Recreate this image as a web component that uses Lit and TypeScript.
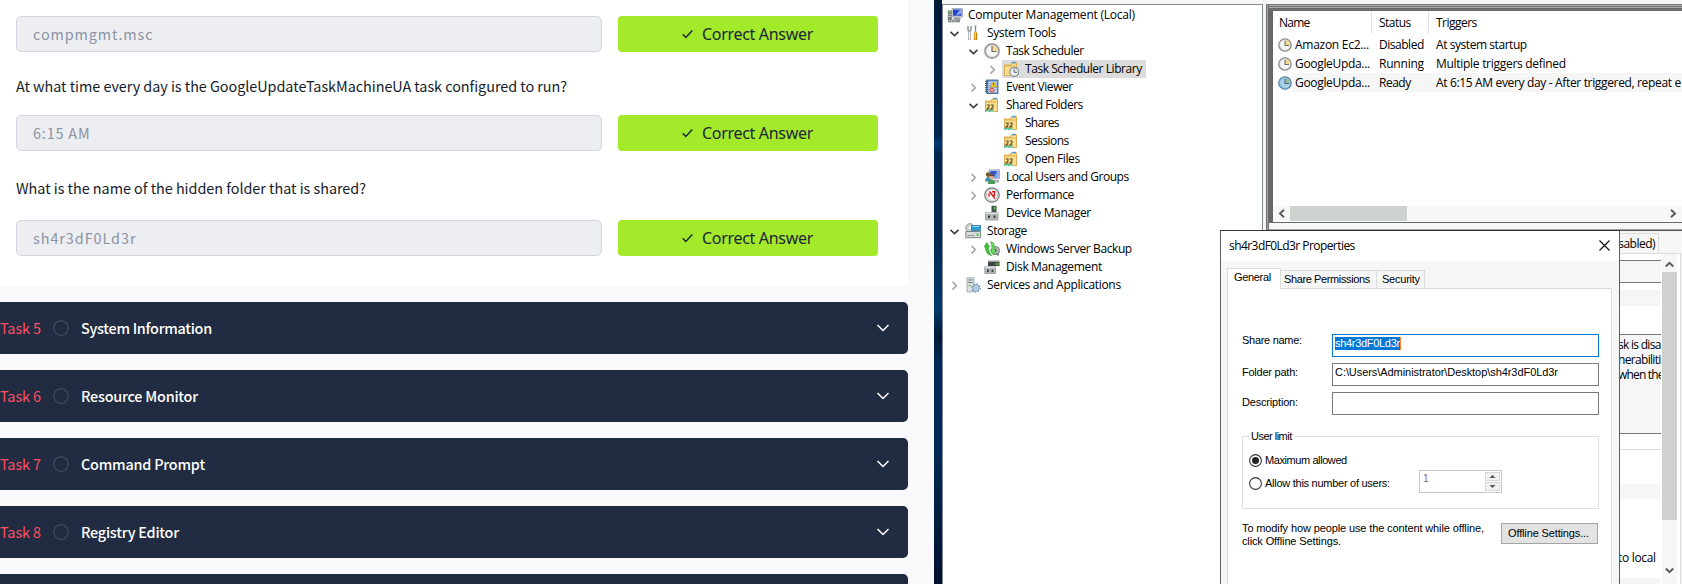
import { LitElement, html, css, svg, nothing } from "lit";
import { customElement, property } from "lit/decorators.js";

/* Text run whose tracking is tuned so that it spans a given width. */
@customElement("fit-text")
class FitText extends LitElement {
  @property({ type: Number }) w = 0;
  @property() text = "";
  static styles = css`
    :host { display: block; white-space: pre; flex: none; }
    span { display: inline-block; }
  `;
  render() {
    return html`<span>${this.text}</span>`;
  }
  updated() {
    const el = this.renderRoot.querySelector("span") as HTMLElement;
    el.style.letterSpacing = "0px";
    const natural = el.getBoundingClientRect().width;
    if (this.w && this.text.length > 1) {
      el.style.letterSpacing = `${(this.w - natural) / (this.text.length - 0.5)}px`;
    }
  }
}

const t = (text: string, w: number, cls = "") =>
  html`<fit-text class=${cls} .text=${text} .w=${w}></fit-text>`;

const icon = (body: unknown, cls = "ico") =>
  html`<svg class=${cls} viewBox="0 0 16 16" width="16" height="16">${body}</svg>`;

const folder = svg`
  <path d="M1 3.5h6l1-2h6v13H1z" fill="#e0b04c"/>
  <path d="M2 4.5h6l1-2h4v11H2z" fill="#fbe08f"/>
  <path d="M9 1.5h4" stroke="#4b9fe0" stroke-width="1.4"/>
  <path d="M1.500 5h12v9.5h-12z" fill="#f8dd8d" stroke="#d3a54a" stroke-width=".8"/>`;
const sharedFolder = svg`${folder}
  <path d="M1 15c0-3 3-3 4-1 1-2 4-2 5 1z" fill="#4dbb96"/>
  <path d="M2.800 8h2.200v1.900L3 12h2.500M6.800 8H9v1.900L7 12h2.500" fill="none" stroke="#5b4f28" stroke-width="1.1"/>
  <path d="M2 14.7h3M6.500 14.7h3" stroke="#cfeee4" stroke-width=".8"/>`;
const clock = svg`
  <circle cx="8" cy="8" r="7.2" fill="#cfcfcf" stroke="#858585" stroke-width="1.2"/>
  <circle cx="8" cy="8" r="5.5" fill="#f7f7f5"/>
  <path d="M8 8V2.500A5.500 5.500 0 0 1 13.500 8z" fill="#f3d98b"/>
  <path d="M8 3v5.500h4.500" fill="none" stroke="#6d6d6d" stroke-width="1.2"/>`;
const clockBlue = svg`
  <circle cx="8" cy="8" r="7.2" fill="#86b5d6" stroke="#5585a8" stroke-width="1.3"/>
  <circle cx="8" cy="8" r="5.600" fill="#a9d0ea"/>
  <path d="M8 8V2.500A5.500 5.500 0 0 1 13.500 8z" fill="#9fb9a4"/>
  <path d="M8 3v5.500h4.500" fill="none" stroke="#41637a" stroke-width="1.2"/>`;

const ICONS: Record<string, unknown> = {
  computer: svg`
    <path d="M5 1.500h10.500v8.500H5z" fill="#d9dde6" stroke="#9aa0ac" stroke-width=".8"/>
    <path d="M6 2.500h8.500v6.300H6z" fill="#2746c8"/><path d="M8.500 8.800 13 2.500h1.500v4z" fill="#8fa8f5"/>
    <path d="M.8 3.500h4v10h-4z" fill="#6f7a76"/><path d="M1.500 5h2.600" stroke="#79e06a"/>
    <path d="M1.500 7.500h2.600M1.500 9.500h2.600" stroke="#d5dad7" stroke-width=".9"/>
    <path d="M7 10.500h6l1 2H6z" fill="#9197a3"/><path d="M1 12.500h12v2.800H1z" fill="#858a8c"/>
    <path d="M2 13.800h8" stroke="#d7dadb" stroke-dasharray="1 1"/>`,
  tools: svg`
    <path d="M3 1v4l1.500 1.500L6 5V1" fill="none" stroke="#8d9498" stroke-width="1.5"/>
    <path d="M4.500 6v9" stroke="#a5adb0" stroke-width="2.600"/><path d="M4.500 7v7.500" stroke="#edf0f1" stroke-width="1"/>
    <path d="M10.500 1v6" stroke="#8b9296" stroke-width="1.4"/><path d="M9.500 1h2" stroke="#8b9296"/>
    <path d="M10.500 7.500v7.500" stroke="#c98208" stroke-width="3.4"/><path d="M10.200 8v6.500" stroke="#ffd04f" stroke-width="1.400"/>`,
  clock,
  folderClock: svg`${folder}
    <circle cx="11.200" cy="11" r="4.400" fill="#eef1f2" stroke="#7c8a92" stroke-width="1.1"/>
    <path d="M11.200 8.300V11.300H14" fill="none" stroke="#56646c"/>`,
  event: svg`
    <path d="M2.500 1h11.500v13.500H2.500z" fill="#6d9ad8" stroke="#33588f" stroke-width=".8"/>
    <path d="M4.500 2.500h8.500v11H4.500z" fill="#c3d7f1"/>
    <path d="M5 4.500h8M5 6.500h8M5 8.500h8M5 10.500h8" stroke="#7f9fcf" stroke-width=".7"/>
    <path d="M1 2.500h3M1 4.500h3M1 6.500h3M1 8.500h3M1 10.500h3M1 12.500h3" stroke="#49545f" stroke-width=".9"/>
    <path d="M9.500 2.500 12.500 8H6.500z" fill="#ffd93b" stroke="#c29109" stroke-width=".7"/><path d="M9.500 4.500v2" stroke="#5b4500"/>
    <circle cx="8" cy="11.300" r="2.500" fill="#d4575c"/><path d="m7 10.300 2 2m0-2-2 2" stroke="#fff" stroke-width=".9"/>`,
  shared: sharedFolder,
  users: svg`
    <path d="M5 .8h10.500v9H5z" fill="#d4dae6" stroke="#939dae" stroke-width=".8"/><path d="M6.200 2h8v6.500h-8z" fill="#3158cf"/>
    <path d="M10 8.500 13 2h1.300v6.500z" fill="#86a3f2"/><path d="M9 11h6v2.500H9z" fill="#a9afb9"/>
    <circle cx="4.200" cy="5.600" r="2.400" fill="#7c5426"/><path d="M1 12.500c0-6 6.500-6 6.500 0z" fill="#3f8fae"/>
    <circle cx="7.500" cy="8" r="2.400" fill="#dfb080"/><path d="M5.200 7.500c.5-3 4.500-3 4.700 0-1.500-1-3-1-4.700 0z" fill="#54391c"/>
    <path d="M3.800 15c0-6 7.500-6 7.500 0z" fill="#4b9b5e"/>`,
  perf: svg`
    <circle cx="8" cy="8" r="7.200" fill="#e9e9e9" stroke="#777" stroke-width="1.200"/>
    <circle cx="8" cy="8" r="5.500" fill="#fff" stroke="#b4b4b4" stroke-width=".7"/>
    <path d="M5 9.500V6.500M5.500 4.500l5.500 7M8 4.800h2.500V9" fill="none" stroke="#d3161b" stroke-width="1.500"/>`,
  device: svg`
    <path d="M7.500.8h5v8h-5z" fill="#4b5050"/><path d="M10.500 2v2.500" stroke="#57e04d" stroke-width="1.300"/>
    <path d="M1.500 7.500h12.500v7.500H1.500z" fill="#b4b8b8" stroke="#8a8e8e" stroke-width=".7"/>
    <path d="M1.500 7.500h12.500v1.500H1.500z" fill="#dcdfdf"/><path d="M4 10.500h2v2.500H4zM9.500 10.500h2v2.500h-2z" fill="#3c4040"/>`,
  storage: svg`
    <circle cx="4.800" cy="4.800" r="4.200" fill="#c9ced1" stroke="#8a9297" stroke-width=".8"/><circle cx="4.800" cy="4.800" r="1.200" fill="#fff"/>
    <path d="M6.500 2.500h9v5h-9z" fill="#2c9bd1" stroke="#1c6e9b" stroke-width=".7"/><path d="M7.500 3.500h6.500" stroke="#92dbf8"/>
    <path d="M.8 8.500h14.700v6.200H.8z" fill="#d8dcdc" stroke="#737a7b" stroke-width=".9"/>
    <path d="M2.500 12.500h7" stroke="#8f9697"/><path d="M12.500 10.500v2.500" stroke="#3fcb35" stroke-width="1.800"/>`,
  backup: svg`
    <circle cx="11.500" cy="9.500" r="4" fill="#b5b9ba" stroke="#777d7f"/><circle cx="11.500" cy="9.500" r="1.300" fill="#4c5254"/>
    <path d="M14 13v2M12 13h3" stroke="#6b7173"/>
    <path d="M0 6 2.800 1.500 5.800 6H4.500c0 4 1 6 3.400 8.500C3 14 1.300 10 1.500 6z" fill="#42c638" stroke="#1d8a1a" stroke-width=".5"/>
    <path d="M6.500.8c3 0 4.500 3 4 8.200H12L9.300 14 6.200 9h1.500c.4-3 .2-5.500-1.200-8.200z" fill="#65dd58" stroke="#1d8a1a" stroke-width=".5"/>`,
  disk: svg`
    <path d="M4 2.500h11.500v4.500H4z" fill="#3f4445"/><path d="M11.500 5h3" stroke="#4be045" stroke-width="1.300"/>
    <path d="M4 2h11.500" stroke="#9aa0a1"/><path d="M.8 7.500h10.700v7H.8z" fill="#b4b8b8" stroke="#8a8e8e" stroke-width=".7"/>
    <path d="M.8 7.500h10.700V9H.8z" fill="#e0e3e3"/><path d="M3 10.500h1.800v2.500H3zM7.500 10.500h1.800v2.500H7.500z" fill="#3c4040"/>`,
  services: svg`
    <path d="M2 .8h7v14H2z" fill="#dce1e4" stroke="#969da1" stroke-width=".8"/>
    <path d="M3.200 3h4.600M3.200 5.500h4.600" stroke="#6d767b"/><path d="M3.500 8.500h2.500" stroke="#58b54e"/>
    <circle cx="11" cy="11" r="3" fill="#dceaf5" stroke="#86a7c4" stroke-width="1.500"/>
    <circle cx="11" cy="11" r="4.300" fill="none" stroke="#86a7c4" stroke-width="1.300" stroke-dasharray="1.500 1.850"/>
    <circle cx="11" cy="11" r="1.100" fill="#7b98b3"/>`,
};

type Node = [level: number, exp: "" | "open" | "closed", icon: string, text: string, w: number, selected?: boolean];
const TREE: Node[] = [
  [0, "", "computer", "Computer Management (Local)", 167],
  [1, "open", "tools", "System Tools", 69],
  [2, "open", "clock", "Task Scheduler", 78],
  [3, "closed", "folderClock", "Task Scheduler Library", 117, true],
  [2, "closed", "event", "Event Viewer", 67],
  [2, "open", "shared", "Shared Folders", 77],
  [3, "", "shared", "Shares", 34],
  [3, "", "shared", "Sessions", 44],
  [3, "", "shared", "Open Files", 55],
  [2, "closed", "users", "Local Users and Groups", 123],
  [2, "closed", "perf", "Performance", 68],
  [2, "", "device", "Device Manager", 85],
  [1, "open", "storage", "Storage", 40],
  [2, "closed", "backup", "Windows Server Backup", 126],
  [2, "", "disk", "Disk Management", 96],
  [1, "closed", "services", "Services and Applications", 134],
];

const expander = (kind: string) => html`<svg class="exp" width="11" height="11" viewBox="0 0 11 11">
  ${kind === "open"
    ? svg`<path d="M1.500 3.800 5.500 7.500 9.500 3.800" fill="none" stroke="#404040" stroke-width="1.700"/>`
    : kind === "closed"
      ? svg`<path d="M3.500 1.800 7.300 5.700 3.500 9.600" fill="none" stroke="#a6a6a6" stroke-width="1.600"/>`
      : nothing}
</svg>`;

const arrow = (d: string, cls = "arrow") => html`<svg class=${cls} width="9" height="9" viewBox="0 0 9 9">
  <path d=${d} fill="none" stroke="#5c5c5c" stroke-width="2"/></svg>`;

@customElement("task-room")
class TaskRoom extends LitElement {
  static styles = css`
    :host {
      display: block; width: 934px; height: 584px; overflow: hidden; background: #f9f9fb; flex: none;
      font: 14.4px "Noto Sans CJK JP", "Noto Sans", sans-serif; color: #151c2b;
    }
    .card { width: 908px; height: 286px; box-sizing: border-box; background: #fff; border-radius: 0 0 4px 0; padding: 16px 30px 0 16px; }
    .row { display: flex; gap: 16px; height: 36px; }
    .field { width: 586px; box-sizing: border-box; border: 1px solid #d1d5de; border-radius: 5px; background: #edeef2; color: #8b93a3; display: flex; align-items: center; padding: 0 16px 1px; }
    .ok { width: 260px; border-radius: 4px; background: #a3ea2a; display: flex; align-items: center; justify-content: center; gap: 9px; font-family: "Noto Sans", sans-serif; font-size: 16px; color: #1c2538; padding: 0 1px 1px 0; box-sizing: border-box; }
    .q { display: flex; align-items: center; height: 63px; box-sizing: border-box; }
    .q.second { height: 69px; padding-top: 3px; }
    .q.first { padding-top: 4px; }
    .tasks { display: flex; flex-direction: column; gap: 16px; padding-top: 16px; width: 908px; }
    .task { height: 52px; flex: none; background: #212c42; border-radius: 0 5px 5px 0; display: flex; align-items: center; color: #fff; box-sizing: border-box; padding: 0 17px 0 0; }
    .no { width: 53px; color: #ff4f61; padding-bottom: 2px; }
    .ring { margin-right: 12px; }
    .name { font-weight: 500; flex: 1; padding-bottom: 2px; }
  `;
  answer(v: string, w: number) {
    return html`<div class="row">
      <div class="field">${t(v, w)}</div>
      <div class="ok">
        <svg width="11" height="10" viewBox="0 0 11 10"><path d="M.7 5.200 3.800 8.400 10.300 1.500" fill="none" stroke="#1c2538" stroke-width="1.500"/></svg>
        ${t("Correct Answer", 111)}
      </div>
    </div>`;
  }
  render() {
    const tasks: [string, string, number][] = [
      ["Task 5", "System Information", 131], ["Task 6", "Resource Monitor", 117],
      ["Task 7", "Command Prompt", 124], ["Task 8", "Registry Editor", 98], ["", "", 0],
    ];
    return html`
      <div class="card">
        ${this.answer("compmgmt.msc", 120)}
        <div class="q first">${t("At what time every day is the GoogleUpdateTaskMachineUA task configured to run?", 551)}</div>
        ${this.answer("6:15 AM", 57)}
        <div class="q second">${t("What is the name of the hidden folder that is shared?", 350)}</div>
        ${this.answer("sh4r3dF0Ld3r", 103)}
      </div>
      <div class="tasks">${tasks.map(([no, name, w]) => html`<div class="task">
        <div class="no">${t(no, 41)}</div>
        <svg class="ring" width="16" height="16" viewBox="0 0 16 16"><circle cx="8" cy="8" r="7.300" fill="none" stroke="#3b4759" stroke-width="1.400"/></svg>
        <div class="name">${t(name, w)}</div>
        <svg width="16" height="16" viewBox="0 0 16 16"><path d="m2.500 5 5.500 5.500L13.500 5" fill="none" stroke="#fff" stroke-width="1.500"/></svg>
      </div>`)}</div>`;
  }
}

@customElement("share-dialog")
class ShareDialog extends LitElement {
  static styles = css`
    :host { display: flex; flex-direction: column; box-sizing: border-box; width: 400px; height: 354px; border: 1px solid #5f5f5f; border-top-color: #333; border-bottom: 0; background: #f6f6f6; font: 11px/13px "Liberation Sans", sans-serif; color: #000; }
    .title { height: 30px; box-sizing: border-box; background: #fff; display: flex; justify-content: space-between; align-items: center; padding: 0 9px 2px 8px; font: 12px "Open Sans", sans-serif; }
    .tabs { display: flex; align-items: flex-end; height: 27px; padding: 0 0 0 6px; }
    .tab { box-sizing: border-box; border: 1px solid #dcdcdc; border-bottom: 0; border-left: 0; height: 18px; display: flex; align-items: center; padding: 0 0 1px 3px; width: 96px; }
    .tab.on { height: 21px; width: 54px; border-left: 1px solid #dcdcdc; background: #fff; padding: 0 0 3px 6px; margin-bottom: -1px; position: relative; }
    .tab.sec { width: 48px; padding-left: 5px; }
    .page { flex: 1; margin: 0 7px 0 6px; border: 1px solid #dcdcdc; border-bottom: 0; background: #fff; padding: 45px 11px 0 14px; display: flex; flex-direction: column; min-height: 0; overflow: hidden; }
    .line { display: flex; height: 23px; margin-bottom: 6px; }
    .label { width: 90px; }
    .line.f .label { padding-top: 3px; }
    .line.d .label { padding-top: 4px; }
    .box { width: 267px; box-sizing: border-box; border: 1px solid #7a7a7a; padding: 2px 2px; }
    .box.focus { border: 1px solid #0078d7; padding: 2px; }
    .sel { width: fit-content; background: #0078d7; color: #fff; height: 13px; border-right: 1px solid #ff8728; }
    .group { border: 1px solid #dcdfdf; height: 73px; box-sizing: border-box; margin-top: 15px; width: 357px; flex: none; padding: 0 0 0 6px; }
    .legend { width: fit-content; background: #fff; padding: 0 3px 0 2px; margin-top: -7px; }
    .choice { display: flex; align-items: center; height: 13px; gap: 3px; }
    .choice.a { margin-top: 11px; }
    .choice.b { margin-top: 10px; }
    .spin { margin: -4px 0 0 26px; width: 83px; height: 23px; box-sizing: border-box; border: 1px solid #c6c6c6; flex: none; display: flex; justify-content: space-between; padding: 1px 1px 1px 3px; color: #8c7070; }
    .spin .btns { display: flex; flex-direction: column; gap: 1px; }
    .spin .btns svg { display: block; background: #f0f3f0; outline: 1px solid #d8d8d8; outline-offset: -1px; }
    .foot { display: flex; justify-content: space-between; margin-top: 14px; padding-right: 2px; }
    .note { margin-top: -1px; }
    .btn { width: 97px; height: 21px; box-sizing: border-box; border: 1px solid #a4a4a4; background: #e3e3e3; padding: 3px 0 0 6px; }
  `;
  radio(on: boolean) {
    return html`<svg width="13" height="13" viewBox="0 0 13 13"><circle cx="6.500" cy="6.500" r="5.900" fill="#fff" stroke="#333" stroke-width="1.100"/>
      ${on ? svg`<circle cx="6.500" cy="6.500" r="3.500" fill="#222"/>` : nothing}</svg>`;
  }
  render() {
    return html`
      <div class="title">${t("sh4r3dF0Ld3r Properties", 126)}
        <svg width="11" height="11" viewBox="0 0 11 11"><path d="m.5.5 10 10m0-10-10 10" stroke="#111" stroke-width="1.200"/></svg></div>
      <div class="tabs"><div class="tab on">${t("General", 37)}</div><div class="tab">${t("Share Permissions", 86)}</div><div class="tab sec">${t("Security", 38)}</div></div>
      <div class="page">
        <div class="line"><div class="label">${t("Share name:", 60)}</div><div class="box focus"><div class="sel">${t("sh4r3dF0Ld3r", 65)}</div></div></div>
        <div class="line f"><div class="label">${t("Folder path:", 56)}</div><div class="box">${t("C:\\Users\\Administrator\\Desktop\\sh4r3dF0Ld3r", 223)}</div></div>
        <div class="line d"><div class="label">${t("Description:", 56)}</div><div class="box"></div></div>
        <div class="group">
          <div class="legend">${t("User limit", 41)}</div>
          <div class="choice a">${this.radio(true)}${t("Maximum allowed", 82)}</div>
          <div class="choice b">${this.radio(false)}${t("Allow this number of users:", 125)}
            <div class="spin"><span>1</span><div class="btns">
              <svg width="15" height="9" viewBox="0 0 15 9"><path d="M4.500 6h6l-3-3z" fill="#555"/></svg>
              <svg width="15" height="9" viewBox="0 0 15 9"><path d="M4.500 3h6l-3 3z" fill="#555"/></svg></div></div>
          </div>
        </div>
        <div class="foot">
          <div class="note">${t("To modify how people use the content while offline,", 242)}${t("click Offline Settings.", 99)}</div>
          <div class="btn">${t("Offline Settings...", 81)}</div>
        </div>
      </div>`;
  }
}

@customElement("mgmt-console")
class MgmtConsole extends LitElement {
  static styles = css`
    :host { display: flex; position: relative; width: 740px; height: 584px; overflow: hidden; background: #f6f6f6; font: 12px/18px "Open Sans", sans-serif; color: #000; }
    svg { display: block; flex: none; }
    .tree { width: 321px; box-sizing: border-box; flex: none; margin-top: 4px; border: 1px solid #828790; border-bottom: 0; background: #fff; padding-top: 1px; }
    .node { display: flex; align-items: center; height: 18px; }
    .node.l0 { padding-left: 4px; }
    .node.l1 { padding-left: 6px; }
    .node.l2 { padding-left: 25px; }
    .node.l3 { padding-left: 44px; }
    .exp { margin-right: 4px; }
    .hit { display: flex; align-items: center; height: 18px; gap: 6px; padding: 0 4px 0 1px; }
    .l0 .hit { padding-left: 0; gap: 5px; }
    .hit.on { background: #dcdcdc; }
    .right { flex: 1; min-width: 0; margin: 4px 0 0 3px; display: flex; flex-direction: column; padding-left: 3px; background: linear-gradient(90deg, #6b6b6b 0 1px, #a6a6a6 1px 2px, #6b6b6b 2px); }
    .list { height: 212px; box-sizing: border-box; border: solid #666; border-width: 0 0 1px 4px; background: #fff; display: flex; flex-direction: column; overflow: hidden; }
    .frame { height: 7px; flex: none; background: linear-gradient(#777 0 1px, #a9a9a9 1px 2px, #777 2px 3px, #aaa 3px 4px, #666 4px 5px, #777 5px 6px, #666 6px); }
    .grid { display: grid; grid-template-columns: 19px 80px 57px 1fr; align-items: center; }
    .head { height: 23px; margin-bottom: 1px; }
    .head .c { height: 23px; line-height: 23px; }
    .head .n { grid-column: 1 / 3; border-right: 1px solid #e2e2e2; padding-left: 6px; }
    .head .s { border-right: 1px solid #e2e2e2; }
    .s, .g { padding-left: 7px; }
    .item { height: 19px; }
    .item .ico { width: 14px; height: 14px; margin-left: 5px; }
    .item .c { height: 19px; line-height: 20px; white-space: nowrap; }
    .item .n { padding-left: 3px; }
    .hot .c { background: #f6f6f6; }
    .hbar { margin-top: auto; height: 15px; margin-bottom: 1px; background: #f7f7f7; display: flex; align-items: center; justify-content: space-between; padding: 0 4px; }
    .hthumb { width: 117px; height: 15px; background: #cdd2ce; margin: 0 auto 0 4px; }
    .gap { height: 6px; background: #f7f7f7; flex: none; }
    .lower { border-top: 1px solid #a0a0a0; flex: 1; display: flex; flex-direction: column; align-items: flex-end; background: #f6f6f6; box-shadow: inset 0 1px #555; overflow: hidden; }
    .ltab { height: 20px; width: 60px; margin: 3px 23px 0 0; border: 1px solid #dcdcdc; border-bottom: 0; box-sizing: border-box; display: flex; justify-content: flex-end; padding-right: 3px; line-height: 19px; }
    .lpage { display: flex; width: 82px; flex: 1; border-top: 1px solid #dcdcdc; border-right: 1px solid #dcdcdc; margin-right: 1px; background: #fff; }
    .content { width: 63px; overflow: hidden; display: flex; flex-direction: column; }
    .content div { flex: none; padding-left: 20px; box-sizing: border-box; }
    .soft { background: #f6f6f6; }
    .ln { border-top: 1px solid #777; }
    .vbar { width: 15px; background: #f6f6f6; margin-left: 1px; display: flex; flex-direction: column; align-items: center; padding-top: 6px; box-sizing: border-box; }
    .vthumb { width: 15px; height: 248px; margin: 3px 0 46px; background: #cdd2ce; flex: none; }
    .s6 { height: 6px; }
    .s22 { height: 22px; }
    .s8 { height: 8px; }
    .s16 { height: 16px; }
    .s28 { height: 28px; }
    .para { height: 99px; line-height: 15px; padding-top: 2px; }
    .s35 { height: 35px; border-top: 1px solid #ddd; }
    .s15 { height: 15px; }
    .tail { height: 79px; padding-top: 50px; }
    share-dialog { position: absolute; left: 278px; top: 230px; }
  `;
  render() {
    return html`
      <div class="tree">${TREE.map(([lv, exp, ic, text, w, sel]) => html`<div class="node l${lv}">
        ${lv ? expander(exp) : nothing}<div class="hit ${sel ? "on" : ""}">${icon(ICONS[ic])}${t(text, w)}</div></div>`)}</div>
      <div class="right">
        <div class="frame"></div>
        <div class="list">
          <div class="grid head"><div class="c n">${t("Name", 31)}</div><div class="c s">${t("Status", 32)}</div><div class="c g">${t("Triggers", 41)}</div></div>
          ${this.item(clock, "Amazon Ec2...", 74, "Disabled", 45, "At system startup", 91)}
          ${this.item(clock, "GoogleUpda...", 75, "Running", 45, "Multiple triggers defined", 130)}
          ${this.item(clockBlue, "GoogleUpda...", 75, "Ready", 32, "At 6:15 AM every day - After triggered, repeat e", 245, true)}
          <div class="hbar">${arrow("M7 .8 3 4.500 7 8.200")}<div class="hthumb"></div>${arrow("M2 .8 6 4.500 2 8.200")}</div>
        </div>
        <div class="gap"></div>
        <div class="lower">
          <div class="ltab">${t("sabled)", 37)}</div>
          <div class="lpage">
            <div class="content">
              <div class="s6"></div><div class="soft ln s22"></div><div class="ln s8"></div><div class="soft s16"></div><div class="s28"></div>
              <div class="soft ln para">${t("sk is disa", 43)}${t("nerabiliti", 43)}${t("when the", 46)}</div>
              <div class="ln s16"></div><div class="s35"></div><div class="soft s15"></div><div class="tail">${t("to local", 38)}</div><div class="soft s6"></div>
            </div>
            <div class="vbar">${arrow("M.8 6.500 4.500 2.800 8.200 6.500")}<div class="vthumb"></div>${arrow("M.8 2.500 4.500 6.200 8.200 2.500")}</div>
          </div>
        </div>
      </div>
      <share-dialog></share-dialog>`;
  }
  item(ic: unknown, n: string, nw: number, s: string, sw: number, g: string, gw: number, hot = false) {
    return html`<div class="grid item ${hot ? "hot" : ""}">${icon(ic)}<div class="c n">${t(n, nw)}</div><div class="c s">${t(s, sw)}</div><div class="c g">${t(g, gw)}</div></div>`;
  }
}

@customElement("app-root")
class AppRoot extends LitElement {
  static styles = css`
    :host { display: flex; width: 1682px; height: 584px; overflow: hidden; background: #f6f6f6; }
    .edge { width: 8px; flex: none; background: linear-gradient(#001a38 0, #001f44 60px, #00264f 135px, #003a70 143px, #00264d 155px, #00284f 230px, #003a6b 310px, #001838 335px, #002b57 365px, #002a55 450px, #001b3c 530px, #00122e 584px); }
  `;
  render() {
    return html`<task-room></task-room><div class="edge"></div><mgmt-console></mgmt-console>`;
  }
}
